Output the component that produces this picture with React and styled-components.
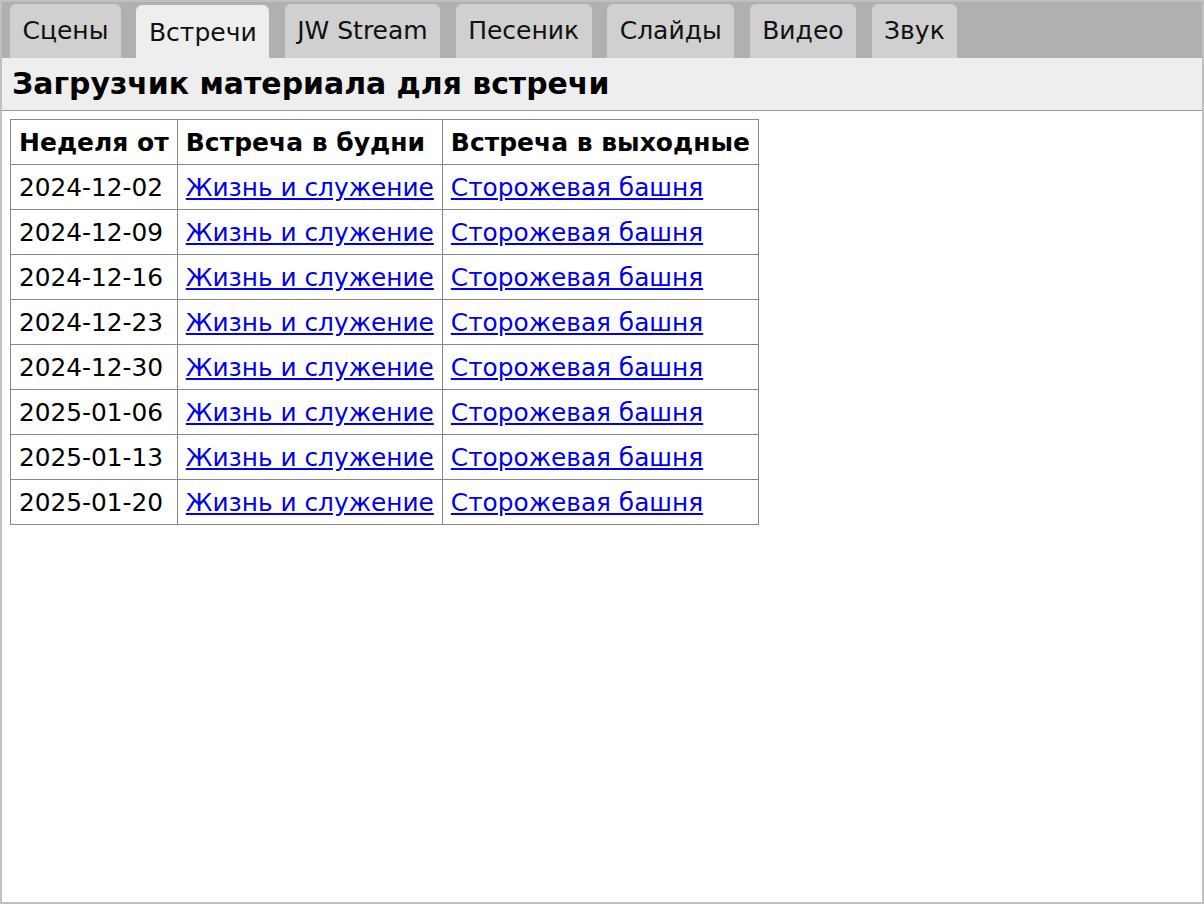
import React from "react";
import styled, { createGlobalStyle } from "styled-components";

const GlobalStyle = createGlobalStyle`
  html, body {
    margin: 0;
    padding: 0;
    background: #ffffff;
  }
  body {
    font-family: "DejaVu Sans", sans-serif;
    color: #000;
  }
`;

const Frame = styled.div`
  box-sizing: border-box;
  width: 1204px;
  height: 904px;
  border: 2px solid #c0c0c0;
  display: flex;
  flex-direction: column;
  background: #ffffff;
`;

const TabBar = styled.div`
  display: flex;
  align-items: flex-end;
  gap: 15.5px;
  height: 56px;
  padding: 0 8px;
  background: #b0b0b0;
`;

const Tab = styled.div`
  box-sizing: border-box;
  height: ${p => (p.$active ? "53px" : "54px")};
  padding: ${p => (p.$active ? "14px 12.5px 0" : "13px 12.5px 0")};
  font-size: 25px;
  line-height: 28px;
  color: #111;
  background: ${p => (p.$active ? "#eeeeee" : "#d0d0d0")};
  border-radius: 6px 6px 0 0;
  white-space: nowrap;
`;

const Header = styled.div`
  padding: 10px 10px;
  background: #eeeeee;
  border-bottom: 1px solid #999;
  font-size: 29.9px;
  font-weight: bold;
  line-height: 32px;
`;

const Table = styled.table`
  border-collapse: collapse;
  margin: 8px;
  line-height: 28px;
`;

const Th = styled.th`
  border: 1px solid #888;
  padding: 9px 8px 7px;
  text-align: left;
  font-size: 25px;
  font-weight: bold;
  white-space: nowrap;
`;

const Td = styled.td`
  border: 1px solid #888;
  padding: 9px 8px 7px;
  font-size: 24.8px;
  white-space: nowrap;
`;

const Link = styled.a`
  color: #0000ee;
  text-decoration: underline;
`;

const tabs = ["Сцены", "Встречи", "JW Stream", "Песеник", "Слайды", "Видео", "Звук"];

const weeks = [
  "2024-12-02",
  "2024-12-09",
  "2024-12-16",
  "2024-12-23",
  "2024-12-30",
  "2025-01-06",
  "2025-01-13",
  "2025-01-20",
];

const App = () => {
  return (
    <>
      <GlobalStyle />
      <Frame>
        <TabBar>
          {tabs.map(t => (
            <Tab key={t} $active={t === "Встречи"}>
              {t}
            </Tab>
          ))}
        </TabBar>
        <Header>Загрузчик материала для встречи</Header>
        <div>
          <Table>
            <thead>
              <tr>
                <Th>Неделя от</Th>
                <Th>Встреча в будни</Th>
                <Th>Встреча в выходные</Th>
              </tr>
            </thead>
            <tbody>
              {weeks.map(w => (
                <tr key={w}>
                  <Td>{w}</Td>
                  <Td>
                    <Link href="#">Жизнь и служение</Link>
                  </Td>
                  <Td>
                    <Link href="#">Сторожевая башня</Link>
                  </Td>
                </tr>
              ))}
            </tbody>
          </Table>
        </div>
      </Frame>
    </>
  );
};

export default App;
